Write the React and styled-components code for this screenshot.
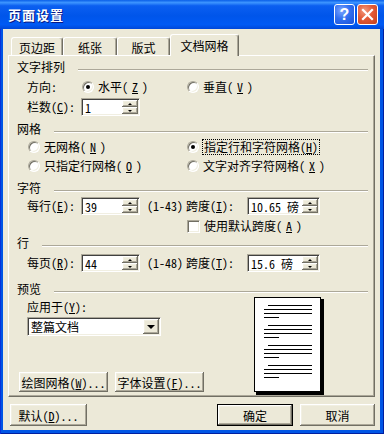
import React from "react";
import styled, { createGlobalStyle } from "styled-components";

const FONT = `"Noto Sans Mono CJK SC", "Noto Sans CJK SC", sans-serif`;

const GlobalStyle = createGlobalStyle`
  html, body { margin: 0; padding: 0; background: #fff; }
  body { font-family: ${FONT}; font-size: 12px; color: #000; }
`;

// classic 3d edges
const RAISED = `inset -1px -1px #716f64, inset 1px 1px #fff, inset -2px -2px #aca899, inset 2px 2px #f1efe2`;

const Window = styled.div`
  width: 384px;
  height: 434px;
  display: flex;
  flex-direction: column;
  background: #0055e5;
  box-shadow: inset 1px 0 #0831d9, inset -1px -1px #001ea0;
  font-family: ${FONT};
  font-size: 12px;
`;

const TitleBar = styled.div`
  height: 29px;
  flex: none;
  display: flex;
  align-items: center;
  padding: 0 6px 0 8px;
  background: linear-gradient(180deg, #0a5fe8 0%, #3d95ff 9%, #0b5ff0 20%, #0055ea 55%, #005af4 85%, #0047d8 100%);
`;

const Title = styled.span`
  flex: 1;
  color: #fff;
  font-weight: bold;
  font-size: 13px;
  letter-spacing: 1px;
  text-shadow: 1px 1px #0a1883;
`;

const CaptionButton = styled.div`
  box-sizing: border-box;
  width: 21px;
  height: 21px;
  margin-left: 2px;
  border: 1px solid #fff;
  border-radius: 3px;
  display: grid;
  place-items: center;
  color: #fff;
  font: bold 16px/1 "Liberation Sans", sans-serif;
  background: ${(p) =>
    p.$close
      ? "radial-gradient(circle at 35% 30%, #f29a7e 0%, #e35a37 45%, #c4401c 100%)"
      : "radial-gradient(circle at 35% 30%, #7ea6ff 0%, #3270f0 45%, #1a50d8 100%)"};
`;

const Body = styled.div`
  flex: 1;
  margin: 0 4px 4px 3px;
  padding: 6px 5px 0;
  background: #ece9d8;
  display: flex;
  flex-direction: column;
`;

const TabStrip = styled.div`
  height: 20px;
  display: flex;
  align-items: flex-end;
  padding-left: 3px;
`;

const Tab = styled.div`
  box-sizing: border-box;
  width: ${(p) => p.$w}px;
  height: ${(p) => (p.$active ? 22 : 18)}px;
  margin-bottom: ${(p) => (p.$active ? -1 : 0)}px;
  position: relative;
  z-index: ${(p) => (p.$active ? 1 : 0)};
  background: #ece9d8;
  border: 1px solid;
  border-color: #fff #716f64 transparent #fff;
  border-bottom: none;
  border-radius: 3px 3px 0 0;
  box-shadow: inset -1px 0 #aca899;
  display: flex;
  align-items: center;
  justify-content: center;
  padding-top: ${(p) => (p.$active ? 0 : 1)}px;
`;

const Panel = styled.div`
  box-sizing: border-box;
  height: 342px;
  border: 1px solid;
  border-color: #fff #716f64 #716f64 #fff;
  box-shadow: inset -1px -1px #aca899;
  padding: 3px 6px 1px 8px;
  display: flex;
  flex-direction: column;
`;

const Heading = styled.div`
  height: 16px;
  margin-top: ${(p) => p.$mt || 0}px;
  display: flex;
  align-items: center;
  line-height: 16px;
`;

const Rule = styled.div`
  flex: 1;
  margin: 5px 0 0 13px;
  border-top: 1px solid #aca899;
  border-bottom: 1px solid #fff;
`;

const Row = styled.div`
  height: ${(p) => p.$h || 20}px;
  margin-top: ${(p) => p.$mt || 0}px;
  padding-left: ${(p) => p.$indent ?? 10}px;
  display: grid;
  grid-template-columns: ${(p) => p.$cols};
  align-items: center;
  white-space: nowrap;
`;

const Label = styled.span`
  line-height: 14px;
  padding-left: ${(p) => p.$pad || 0}px;
`;

const RadioItem = styled.label`
  display: flex;
  align-items: center;
  gap: 4px;
  line-height: 14px;
`;

const RadioDot = styled.span`
  box-sizing: border-box;
  width: 12px;
  height: 12px;
  margin-left: 1px;
  border-radius: 50%;
  background: #fff;
  border: 1px solid;
  border-color: #aca899 #fff #fff #aca899;
  box-shadow: inset 1px 1px #716f64, inset -1px -1px #f1efe2;
  display: grid;
  place-items: center;
  &::after {
    content: "";
    width: 4px;
    height: 4px;
    border-radius: 50%;
    background: ${(p) => (p.$on ? "#000" : "transparent")};
  }
`;

const Focus = styled.span`
  outline: 1px dotted #000;
  outline-offset: 0;
  padding: 0 1px;
`;

const CheckBox = styled.span`
  box-sizing: border-box;
  width: 13px;
  height: 13px;
  margin-left: 1px;
  background: #fff;
  border: 1px solid;
  border-color: #aca899 #fff #fff #aca899;
  box-shadow: inset 1px 1px #716f64, inset -1px -1px #f1efe2;
`;

const Field = styled.div`
  box-sizing: border-box;
  width: ${(p) => p.$w}px;
  height: ${(p) => p.$h || 18}px;
  background: #fff;
  border: 1px solid;
  border-color: #aca899 #fff #fff #aca899;
  box-shadow: inset 1px 1px #404040, inset -1px -1px #f1efe2;
  padding: 1px;
  display: flex;
`;

const FieldText = styled.span`
  flex: 1;
  padding-left: 2px;
  display: flex;
  align-items: center;
  font-size: ${(p) => p.$size || 12}px;
`;

const Spinner = styled.div`
  width: 16px;
  display: flex;
  flex-direction: column;
`;

const ArrowBtn = styled.div`
  flex: 1;
  background: #ece9d8;
  box-shadow: ${RAISED};
  display: grid;
  place-items: center;
`;

const Arrow = styled.span`
  width: 0;
  height: 0;
  border-left: ${(p) => p.$s}px solid transparent;
  border-right: ${(p) => p.$s}px solid transparent;
  ${(p) => (p.$up ? "border-bottom" : "border-top")}: ${(p) => p.$s}px solid #000;
`;

const Preview = styled.div`
  height: 98px;
  display: flex;
`;

const PreviewLeft = styled.div`
  width: 237px;
  display: flex;
  flex-direction: column;
  padding-bottom: 3px;
  box-sizing: border-box;
`;

const Combo = styled(Field)`
  margin: 1px 0 0 10px;
`;

const ButtonRow = styled.div`
  margin-top: auto;
  padding-left: ${(p) => p.$pad || 0}px;
  display: flex;
  gap: 7px;
`;

const Button = styled.div`
  box-sizing: border-box;
  width: ${(p) => p.$w}px;
  height: ${(p) => p.$h || 22}px;
  background: #ece9d8;
  border: ${(p) => (p.$default ? "1px solid #000" : "none")};
  box-shadow: ${RAISED};
  display: flex;
  align-items: center;
  justify-content: center;
  white-space: nowrap;
`;

const Footer = styled.div`
  margin-top: 7px;
  padding-left: 2px;
  display: flex;
  gap: 7px;
`;

const Spacer = styled.div`
  flex: 1;
`;

const Spin = ({ w, value }) => (
  <Field $w={w}>
    <FieldText>{value}</FieldText>
    <Spinner>
      <ArrowBtn>
        <Arrow $up $s={2} />
      </ArrowBtn>
      <ArrowBtn>
        <Arrow $s={2} />
      </ArrowBtn>
    </Spinner>
  </Field>
);

const Radio = ({ on, children }) => (
  <RadioItem>
    <RadioDot $on={on} />
    {children}
  </RadioItem>
);

const PagePreview = () => (
  <svg width="70" height="98" viewBox="0 0 70 98" shapeRendering="crispEdges">
    <rect x="2" y="2" width="68" height="96" fill="#000" />
    <rect x="0.5" y="0.5" width="66" height="94" fill="#fff" stroke="#000" />
    {[8, 28, 48, 68].map((y) => (
      <g key={y} stroke="#000" strokeWidth="1">
        <line x1="14" y1={y + 0.5} x2="58" y2={y + 0.5} />
        <line x1="10" y1={y + 4.5} x2="58" y2={y + 4.5} />
        <line x1="10" y1={y + 8.5} x2="58" y2={y + 8.5} />
        <line x1="10" y1={y + 12.5} x2="25" y2={y + 12.5} />
      </g>
    ))}
  </svg>
);

const App = () => {
  return (
    <>
      <GlobalStyle />
      <Window>
        <TitleBar>
          <Title>页面设置</Title>
          <CaptionButton>?</CaptionButton>
          <CaptionButton $close>
            <svg width="13" height="13" viewBox="0 0 13 13">
              <path d="M2 2 L11 11 M11 2 L2 11" stroke="#fff" strokeWidth="2.2" strokeLinecap="square" />
            </svg>
          </CaptionButton>
        </TitleBar>
        <Body>
          <TabStrip>
            <Tab $w={52}>页边距</Tab>
            <Tab $w={54}>纸张</Tab>
            <Tab $w={53}>版式</Tab>
            <Tab $w={69} $active>文档网格</Tab>
          </TabStrip>
          <Panel>
            <Heading>
              文字排列
              <Rule />
            </Heading>
            <Row $mt={2} $cols="54px 105px auto">
              <Label>方向:</Label>
              <Radio on>水平(<u>Z</u>)</Radio>
              <Radio>垂直(<u>V</u>)</Radio>
            </Row>
            <Row $cols="54px 59px">
              <Label>栏数(<u>C</u>):</Label>
              <Spin w={59} value="1" />
            </Row>

            <Heading $mt={4}>
              网格
              <Rule />
            </Heading>
            <Row $h={19} $cols="159px auto">
              <Radio>无网格(<u>N</u>)</Radio>
              <Radio on>
                <Focus>指定行和字符网格(<u>H</u>)</Focus>
              </Radio>
            </Row>
            <Row $h={19} $cols="159px auto">
              <Radio>只指定行网格(<u>O</u>)</Radio>
              <Radio>文字对齐字符网格(<u>X</u>)</Radio>
            </Row>

            <Heading $mt={5}>
              字符
              <Rule />
            </Heading>
            <Row $cols="54px 59px 46px 61px 73px">
              <Label>每行(<u>E</u>):</Label>
              <Spin w={59} value="39" />
              <Label $pad={7}>(1-43)</Label>
              <Label>跨度(<u>I</u>):</Label>
              <Spin w={73} value="10.65 磅" />
            </Row>
            <Row $h={18} $mt={1} $cols="159px auto">
              <span />
              <RadioItem>
                <CheckBox />
                使用默认跨度(<u>A</u>)
              </RadioItem>
            </Row>

            <Heading>
              行
              <Rule />
            </Heading>
            <Row $mt={2} $cols="54px 59px 46px 61px 73px">
              <Label>每页(<u>R</u>):</Label>
              <Spin w={59} value="44" />
              <Label $pad={7}>(1-48)</Label>
              <Label>跨度(<u>T</u>):</Label>
              <Spin w={73} value="15.6 磅" />
            </Row>

            <Heading $mt={8}>
              预览
              <Rule />
            </Heading>
            <Preview>
              <PreviewLeft>
                <Row $h={19} $cols="auto">
                  <Label>应用于(<u>Y</u>):</Label>
                </Row>
                <Combo $w={134} $h={19}>
                  <FieldText>整篇文档</FieldText>
                  <Spinner>
                    <ArrowBtn>
                      <Arrow $s={4} />
                    </ArrowBtn>
                  </Spinner>
                </Combo>
                <ButtonRow $pad={2}>
                  <Button $w={89} $h={20}>绘图网格(<u>W</u>)...</Button>
                  <Button $w={89} $h={20}>字体设置(<u>F</u>)...</Button>
                </ButtonRow>
              </PreviewLeft>
              <PagePreview />
            </Preview>
          </Panel>
          <Footer>
            <Button $w={77}>默认(<u>D</u>)...</Button>
            <Spacer />
            <Button $w={76} $default>确定</Button>
            <Button $w={75}>取消</Button>
          </Footer>
        </Body>
      </Window>
    </>
  );
};

export default App;
